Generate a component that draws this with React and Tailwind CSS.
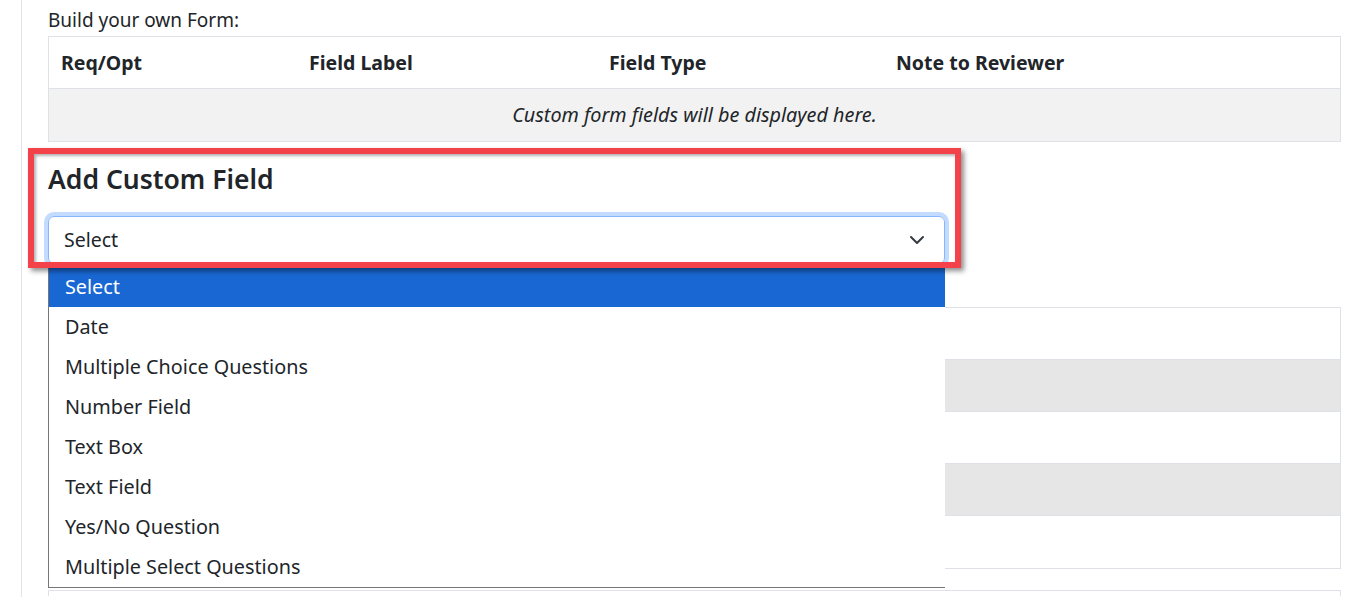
const OPTIONS = [
  "Select",
  "Date",
  "Multiple Choice Questions",
  "Number Field",
  "Text Box",
  "Text Field",
  "Yes/No Question",
  "Multiple Select Questions",
];

const Chevron = () => (
  <svg width="16" height="16" viewBox="0 0 16 16" fill="none">
    <path d="m2 5 6 6 6-6" stroke="#343a40" strokeWidth="2" strokeLinecap="round" strokeLinejoin="round" />
  </svg>
);

const App = () => {
  return (
    <div className="h-[597px] bg-white text-[#212529] font-['Noto_Sans',sans-serif] overflow-hidden">
      <div className="ml-[21px] border-l border-[#e3e3e3] pl-[26px] pr-[16px] h-[597px] relative">
        {/* encabezado */}
        <div className="h-[36px] pt-[7px] text-[19px] leading-[26px]">Build your own Form:</div>

        {/* tabla de campos */}
        <div className="border border-[#dee2e6] w-[1293px]">
          <div className="flex h-[52px] items-center font-bold text-[19.5px] border-b border-[#dee2e6]">
            <div className="w-[248px] pl-[12px]">Req/Opt</div>
            <div className="w-[300px] pl-[12px]">Field Label</div>
            <div className="w-[287px] pl-[12px]">Field Type</div>
            <div className="flex-1 pl-[12px]">Note to Reviewer</div>
          </div>
          <div className="h-[52px] bg-[#f2f2f2] flex items-center justify-center italic text-[19.8px]">
            Custom form fields will be displayed here.
          </div>
        </div>

        {/* agregar campo */}
        <div className="relative">
          <h2 className="pt-[21px] text-[26.5px] leading-[32px] font-semibold mb-[21px]">Add Custom Field</h2>
          <div className="relative w-[897px]">
            <div className="h-[48px] rounded-[6px] border border-[#86b7fe] shadow-[0_0_0_4px_rgba(13,110,253,0.25)] flex items-center justify-between pl-[15px] pr-[19px] text-[19.5px]">
              <span>Select</span>
              <Chevron />
            </div>
          </div>

          {/* marco rojo de anotación */}
          <div className="absolute left-[-20px] top-[6px] w-[933px] h-[120px] border-[6px] border-[#f4424a] shadow-[3px_3px_5px_rgba(0,0,0,0.45),inset_2px_2px_3px_rgba(0,0,0,0.3)] pointer-events-none z-10" />
        </div>

        {/* tabla detrás */}
        <div className="mt-[43px] border border-[#dee2e6] w-[1293px]">
          <div className="h-[52px] bg-white border-b border-[#dee2e6]" />
          <div className="h-[52px] bg-[#e6e6e6] border-b border-[#dee2e6]" />
          <div className="h-[52px] bg-white border-b border-[#dee2e6]" />
          <div className="h-[52px] bg-[#e6e6e6] border-b border-[#dee2e6]" />
          <div className="h-[52px] bg-white" />
        </div>
        <div className="mt-[21px] border-t border-x border-[#dee2e6] w-[1293px] h-[6px]" />

        {/* lista desplegable */}
        <div className="absolute left-[26px] top-[267px] w-[897px] bg-white border-l border-b border-[#767676] z-0">
          {OPTIONS.map((opt, i) => (
            <div
              key={opt}
              className={`h-[40px] flex items-center pl-[16px] text-[19.8px] ${i === 0 ? "bg-[#1967d2] text-white" : "text-[#212529]"}`}
            >
              {opt}
            </div>
          ))}
        </div>
      </div>
    </div>
  );
};

export default App;
